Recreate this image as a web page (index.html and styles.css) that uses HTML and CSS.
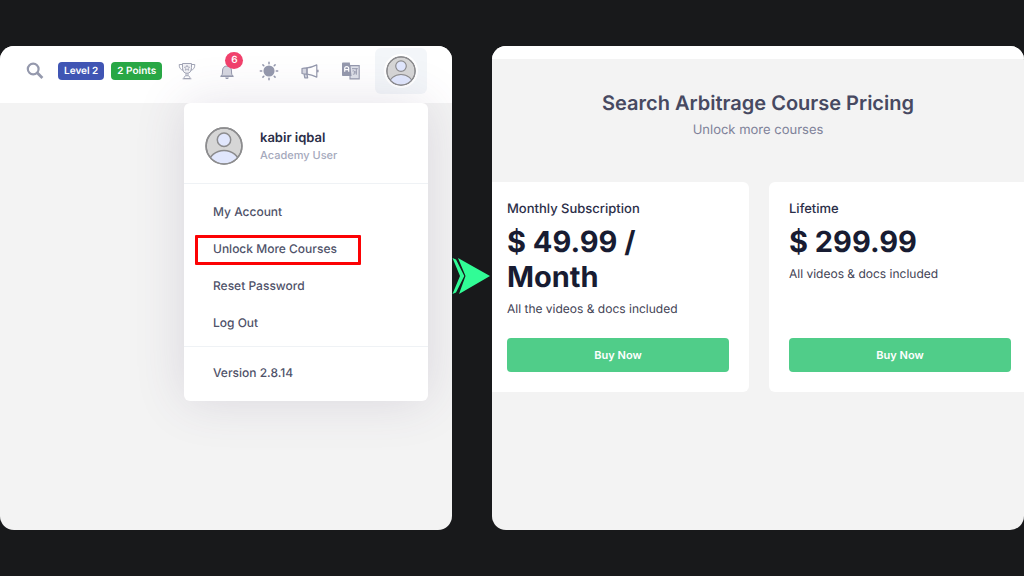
FILE: index.html
```
<!DOCTYPE html>
<html lang="en">
<head>
  <meta charset="UTF-8" />
  <meta name="viewport" content="width=device-width, initial-scale=1.0" />
  <title>Unlock More Courses</title>
  <link rel="stylesheet" href="styles.css">
</head>
<body>
  <main class="steps">
    <section class="panel">
      <header class="topbar">
        <button class="icon-btn" aria-label="Search">
          <svg width="18" height="18" viewBox="0 0 18 18" fill="none" stroke="#9599ad"><circle cx="7.200" cy="7" r="5.400" stroke-width="2.200"/><path d="M11.200 10.800L16.400 16" stroke-width="2.800"/></svg>
        </button>
        <div class="badges">
          <span class="badge badge-level">Level 2</span>
          <span class="badge badge-points">2 Points</span>
        </div>
        <nav class="tools">
          <button class="icon-btn" aria-label="Achievements">
            <svg width="18" height="18" viewBox="0 0 18 18" fill="none" stroke="#a2a5b6" stroke-width="1"><path d="M4.500 1.500h9v4.200c0 3.600-1.600 5.600-4.500 5.600S4.500 9.300 4.500 5.700z" fill="#f1f1f5"/><path d="M4.500 2.500H1.200c0 3.400 1.200 5.400 4.200 5.700M13.500 2.500h3.300c0 3.400-1.200 5.400-4.200 5.700M8 11.300v2.400M10 11.300v2.400M6 16.500c0-1.900.8-2.800 3-2.800s3 .9 3 2.800zM4.600 16.800h8.800"/><path d="M9 3.300l.8 1.700 1.800.2-1.300 1.300.3 1.800L9 7.400l-1.600.9.300-1.800-1.300-1.300 1.800-.2z" stroke-width=".8"/></svg>
          </button>
          <button class="icon-btn" aria-label="Notifications">
            <svg width="18" height="18" viewBox="0 0 18 18"><path d="M2.800 14.300c1.400-1 1.700-2.200 1.700-5.300 0-3.200 1.700-5 4.500-5s4.500 1.800 4.500 5c0 3.100.3 4.300 1.700 5.300z" fill="#d5d7e0" stroke="#9599ad"/><path d="M7.200 15.500h3.600c-.2 1-.8 1.500-1.800 1.500s-1.600-.5-1.800-1.500z" fill="#9599ad"/><path d="M2.600 14.200h12.800" stroke="#9599ad" stroke-width="1.400"/></svg>
            <span class="count">6</span>
          </button>
          <button class="icon-btn" aria-label="Theme">
            <svg width="20" height="20" viewBox="0 0 20 20" stroke="#9599ad" stroke-width="1.500" stroke-linecap="round"><circle cx="10" cy="10" r="4.800" fill="#9599ad"/><path d="M10 1.300v1.400M10 17.300v1.400M1.300 10h1.400M17.300 10h1.400M3.900 3.900l.9.900M15.200 15.200l.9.900M3.900 16.100l.9-.9M15.200 4.800l.9-.9"/></svg>
          </button>
          <button class="icon-btn" aria-label="Announcements">
            <svg width="18" height="18" viewBox="0 0 18 18" fill="none" stroke="#9599ad" stroke-width="1.200" stroke-linejoin="round"><path d="M1 6.500c1.400-.5 3.200-.6 5-.6v6.200c-1.800 0-3.600-.1-5-.6zM3 12l.8 3.800h2.900L6 12.100" fill="#d5d7e0"/><path d="M6 5.900c3.600-.3 6.500-1.400 9.800-3v12.200c-3.300-1.600-6.200-2.700-9.800-3z"/><path d="M16.800 7.700v2.600" stroke-width="1.600"/></svg>
          </button>
          <button class="icon-btn" aria-label="Language">
            <svg width="20" height="20" viewBox="0 0 20 20"><path d="M9 4.600h9.200v13.300H9z" fill="#dfe1e9" stroke="#9599ad" stroke-width="1.100"/><path d="M2.200 1.500h6.600l1.800 13.600H2.200C1.500 15.100 1 14.600 1 14V2.700c0-.7.500-1.200 1.200-1.200z" fill="#9599ad"/><path d="M3.700 10.700V7.600c0-2.600 4-2.600 4 0v3.100M3.700 8.600h4" fill="none" stroke="#fff" stroke-width="1.200"/><path d="M11 7.700h5.800M15.300 7.700v6M11.500 10c1.900-.6 2.600.6 1.700 1.500 1.200.5.600 2.300-1.300 1.500M13.300 11h2" fill="none" stroke="#9599ad"/></svg>
          </button>
        </nav>
        <button class="profile-btn" aria-label="Profile" aria-expanded="true">
          <svg class="avatar-ring" width="34" height="34" viewBox="0 0 38 38"><use href="#avatar"/></svg>
        </button>
      </header>

      <div class="menu">
        <div class="menu-user">
          <svg width="38" height="38" viewBox="0 0 38 38">
            <defs><clipPath id="face"><circle cx="19" cy="19" r="17.500"/></clipPath></defs>
            <g id="avatar" stroke="#8c8c8e" stroke-width="1.500">
              <circle cx="19" cy="19" r="17.900" fill="#d6d6d6"/>
              <g clip-path="url(#face)" fill="#e1e7fd"><circle cx="19" cy="12.800" r="6.700"/><ellipse cx="19" cy="36" rx="15" ry="12.600"/></g>
              <circle cx="19" cy="19" r="17.900" fill="none"/>
            </g>
          </svg>
          <div>
            <div class="user-name">kabir iqbal</div>
            <div class="user-role">Academy User</div>
          </div>
        </div>
        <ul class="menu-list">
          <li><a href="#">My Account</a></li>
          <li class="marked"><a href="#">Unlock More Courses</a></li>
          <li><a href="#">Reset Password</a></li>
          <li><a href="#">Log Out</a></li>
        </ul>
        <div class="menu-version">Version 2.8.14</div>
      </div>
    </section>

    <svg class="arrow" width="38" height="36" viewBox="0 0 38 36" fill="#31fc96" aria-hidden="true"><path d="M6 0L38 18 7 36 13.500 18z"/><path d="M.500 0l3.500 1.600L12.300 18 4 34.400.500 36 8 18z"/></svg>

    <section class="panel">
      <div class="strip"></div>
      <div class="pricing-head">
        <h1>Search Arbitrage Course Pricing</h1>
        <p>Unlock more courses</p>
      </div>
      <div class="plans">
        <article class="plan">
          <h2>Monthly Subscription</h2>
          <div class="price">$ 49.99 / Month</div>
          <p>All the videos &amp; docs included</p>
          <button class="buy">Buy Now</button>
        </article>
        <article class="plan">
          <h2>Lifetime</h2>
          <div class="price">$ 299.99</div>
          <p>All videos &amp; docs included</p>
          <button class="buy">Buy Now</button>
        </article>
      </div>
    </section>
  </main>
</body>
</html>
```
FILE: styles.css
```
*, *::after { box-sizing: border-box; margin: 0; padding: 0; }
body {
  font-family: Inter, "Liberation Sans", sans-serif;
  text-rendering: geometricPrecision;
  background-color: #18191b;
  color: #181c32;
}
a { text-decoration: none; color: inherit; }
button {
  font-family: inherit;
  text-rendering: inherit;
  border: 0;
  background: none;
  cursor: pointer;
}
svg { display: block; }

.steps {
  display: grid;
  grid-template-columns: 452fr 40px 532fr;
  min-height: 100vh;
  padding: 46px 0;
}
.panel {
  position: relative;
  background-color: #f3f3f3;
  border-radius: 14px;
  overflow: hidden;
}
.arrow {
  align-self: center;
  margin-top: -24px;
}

/* Top bar */
.topbar {
  display: flex;
  align-items: center;
  height: 57px;
  padding: 0 25px 8px 26px;
  background-color: #fff;
}
.icon-btn {
  position: relative;
  flex-shrink: 0;
}
.badges {
  display: flex;
  gap: 7px;
  margin-left: 14px;
}
.badge {
  padding: 0 6px;
  border-radius: 4px;
  color: #fff;
  font-size: 10px;
  font-weight: 600;
  line-height: 18px;
  white-space: nowrap;
}
.badge-level { background-color: #4055b4; }
.badge-points { background-color: #28a745; }
.tools {
  display: flex;
  align-items: center;
  flex: 1;
  justify-content: space-between;
  margin: 0 14px 0 16px;
}
.count {
  position: absolute;
  left: 7px;
  top: -10px;
  width: 18px;
  border-radius: 50%;
  background-color: #f1416c;
  color: #fff;
  font-size: 10px;
  font-weight: 600;
  line-height: 17px;
}
.profile-btn {
  display: flex;
  align-items: center;
  justify-content: center;
  width: 52px;
  height: 46px;
  border-radius: 6px;
  background-color: #f3f6f9;
}
.avatar-ring {
  border: 2px solid #fff;
  border-radius: 50%;
}

/* User menu */
.menu {
  position: absolute;
  top: 57px;
  right: 24px;
  width: 244px;
  padding-bottom: 10px;
  background-color: #fff;
  border-radius: 6px;
  box-shadow: 0 0 50px rgba(82, 63, 105, 0.15);
  color: #4f5269;
  font-size: 12px;
  font-weight: 500;
}
.menu-user {
  display: flex;
  align-items: center;
  gap: 17px;
  height: 81px;
  padding: 6px 21px 0;
  border-bottom: 1px solid #eff2f5;
}
.user-name {
  color: #2b2e48;
  font-size: 13px;
  font-weight: 600;
  line-height: 18px;
}
.user-role {
  color: #a5a9bc;
  font-size: 11px;
  line-height: 17px;
}
.menu-list {
  list-style: none;
  padding: 9px 0 5px;
  border-bottom: 1px solid #eff2f5;
}
.menu-list li { position: relative; }
.menu-list a {
  display: block;
  padding: 0 29px;
  line-height: 37px;
}
.marked::after {
  content: "";
  position: absolute;
  left: 11px;
  top: 5px;
  width: 166px;
  height: 30px;
  border: 3px solid #fc0204;
  border-radius: 1px;
  pointer-events: none;
}
.menu-version {
  padding: 7px 29px 0;
  line-height: 37px;
}

/* Pricing */
.strip {
  height: 13px;
  background-color: #fff;
}
.pricing-head {
  padding: 30px 0 42px;
  text-align: center;
}
.pricing-head h1 {
  color: #474961;
  font-size: 20px;
  font-weight: 600;
  line-height: 28px;
}
.pricing-head p {
  margin-top: 3px;
  color: #7e8299;
  font-size: 13px;
  line-height: 20px;
}
/* the row runs a little past the panel on both sides */
.plans {
  display: grid;
  grid-template-columns: 1fr 1fr;
  gap: 20px;
  margin: 0 -7px 0 -5px;
}
.plan {
  display: flex;
  flex-direction: column;
  padding: 18px 20px 20px;
  background-color: #fff;
  border-radius: 6px;
}
.plan h2 {
  color: #2b2e48;
  font-size: 13px;
  font-weight: 500;
  line-height: 18px;
}
.price {
  margin: 6px 0;
  font-size: 29px;
  font-weight: 700;
  line-height: 35px;
}
.plan p {
  margin-bottom: 20px;
  color: #3f4254;
  font-size: 12px;
  line-height: 18px;
}
.buy {
  margin-top: auto;
  border-radius: 4px;
  background-color: #50cd89;
  color: #fff;
  font-size: 11px;
  font-weight: 600;
  line-height: 34px;
}
```
